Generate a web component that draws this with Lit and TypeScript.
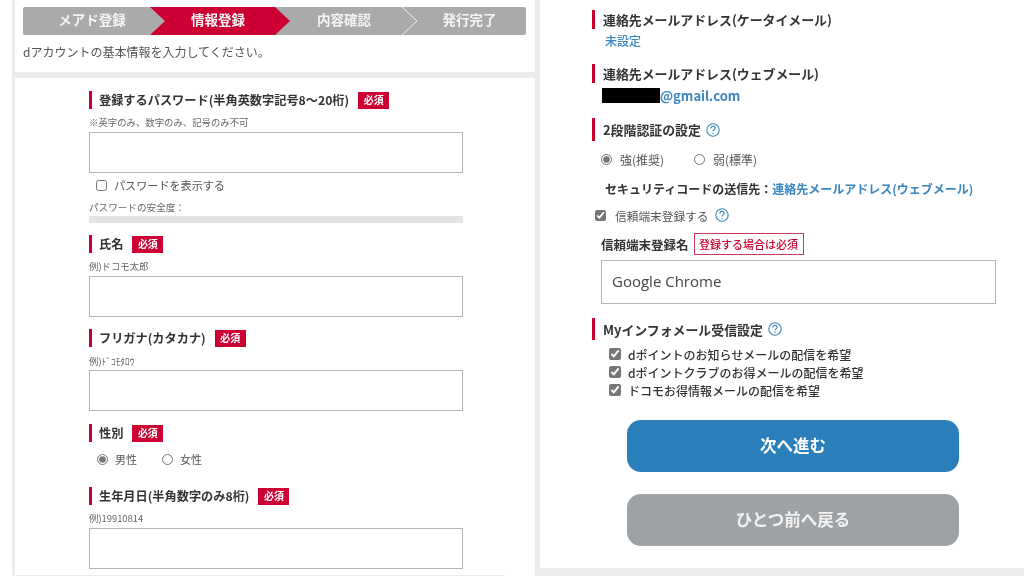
import { LitElement, html, css, svg } from "lit";
import { customElement } from "lit/decorators.js";

const help = html`<svg class="help" viewBox="0 0 14 14" width="14" height="14" aria-hidden="true">
  <circle cx="7" cy="7" r="6.2" fill="none" stroke="#3a87b9" stroke-width="1.1"/>
  <path d="M4.9 5.4c0-1.3 1-2 2.1-2s2.1.8 2.1 1.9c0 1.6-2.1 1.6-2.1 3.3" fill="none" stroke="#3a87b9" stroke-width="1.1"/>
  <path d="M7 9.7v1.2" stroke="#3a87b9" stroke-width="1.1"/>
</svg>`;

@customElement("app-root")
export class AppRoot extends LitElement {
  static styles = css`
    :host {
      display: block;
      width: 1024px;
      height: 576px;
      overflow: hidden;
      background: #fff;
      color: #333;
      font-family: "Noto Sans CJK JP", "Noto Sans", sans-serif;
      font-size: 12px;
      filter: blur(0.35px);
    }
    * { box-sizing: border-box; }
    .page { display: flex; height: 576px; }

    .left {
      margin-left: 12px;
      border-left: 3px solid #ebebeb;
      display: flex;
      flex-direction: column;
      flex: none;
      width: 523px;
    }
    .intro { height: 72px; padding: 7px 9px 0 8px; }
    .steps {
      position: relative;
      display: grid;
      grid-template-columns: 126px 126px 126px 125px;
      height: 28px;
      border-radius: 2px;
      overflow: hidden;
      background: #aaa;
    }
    .steps svg { position: absolute; left: 0; top: 0; }
    .step {
      position: relative;
      padding-left: 12px;
      text-align: center;
      font-size: 13.5px;
      font-weight: 700;
      line-height: 25px;
      color: #f4f4f4;
    }
    .lead { margin: 8px 0 0; font-size: 12px; line-height: 18px; color: #555; }
    .rule { height: 6px; background: #ebebeb; flex: none; }

    .form { flex: 1; min-height: 0; overflow: hidden; padding: 13px 0 0 74px; }
    .edge { flex: none; width: 490px; height: 1px; background: #ebebeb; }
    .col { width: 374px; }
    .head {
      display: flex;
      align-items: center;
      gap: 9px;
      height: 18px;
      border-left: 3px solid #c8002d;
      padding: 0 0 0 7px;
      font-weight: 700;
      font-size: 12.2px;
      color: #333;
      white-space: nowrap;
    }
    .badge {
      flex: none;
      width: 31px;
      height: 17px;
      margin-top: 1px;
      background: #cc0033;
      color: #fff;
      font-size: 10px;
      line-height: 16px;
      font-weight: 700;
      text-align: center;
    }
    .note { font-size: 9.4px; line-height: 14px; color: #666; white-space: nowrap; }
    .safe { margin-top: 8px; font-size: 9.6px; }
    .box {
      display: block;
      width: 100%;
      height: 41px;
      border: 1px solid #b4b4b4;
      border-radius: 0;
      background: #fff;
      margin: 0;
      padding: 0 10px;
    }
    .show {
      display: flex;
      align-items: center;
      gap: 7px;
      height: 14px;
      margin: 5px 0 0 7px;
      color: #555;
      font-size: 11.1px;
    }
    input[type="checkbox"], input[type="radio"] {
      margin: 0;
      flex: none;
      accent-color: #767676;
    }
    .show input { width: 11px; height: 11px; }
    .meter { height: 7px; margin-top: 2px; background: #e1e3e4; }
    .gender { display: flex; align-items: center; height: 14px; margin: 10px 0 0 8px; color: #555; font-size: 11px; }
    .gender input { width: 11px; height: 11px; margin-right: 7px; }
    .gender label { display: flex; align-items: center; margin-right: 25px; }

    .right {
      flex: 1;
      border-left: 5px solid #ebebeb;
      display: flex;
      flex-direction: column;
      height: 576px;
    }
    .rbody { flex: 1; padding: 10px 0 0 52px; }
    .rule-b { height: 8px; background: #ebebeb; flex: none; }
    .rhead { height: 19px; gap: 5px; padding-left: 8px; font-size: 12.9px; font-weight: 700; }
    .val { color: #3a86c0; font-weight: 500; font-size: 12px; line-height: 18px; margin: 3px 0 0 13px; }
    .mail { display: flex; align-items: center; margin: 5px 0 0 10px; height: 15px; font-weight: 700; font-size: 13px; color: #3a86c0; }
    .mask { width: 58px; height: 15px; background: #000; }
    .radios { display: flex; align-items: center; height: 14px; margin: 11px 0 0 9px; color: #555; font-size: 12px; }
    .radios input { width: 11px; height: 11px; margin-right: 8px; }
    .radios label { display: flex; align-items: center; width: 93px; }
    .sec { margin: 15px 0 0 13px; font-weight: 700; font-size: 12px; line-height: 16px; white-space: nowrap; }
    .sec span { color: #3a86c0; }
    .trust { display: flex; align-items: center; height: 16px; margin: 10px 0 0 3px; color: #555; font-size: 11.7px; }
    .trust input { width: 11px; height: 11px; margin-right: 9px; }
    .trust svg { margin-left: 6px; }
    .tname { display: flex; align-items: center; gap: 5px; height: 22px; margin: 10px 0 0 9px; font-weight: 700; font-size: 12.5px; }
    .tag { height: 22px; width: 110px; border: 1px solid #cf3a5c; color: #c8002d; font-size: 11px; font-weight: 500; line-height: 20px; text-align: center; white-space: nowrap; }
    .chrome {
      width: 395px;
      height: 44px;
      margin: 5px 0 0 9px;
      padding-bottom: 2px;
      font: 15px "Open Sans", "Noto Sans", sans-serif;
      color: #444;
    }
    .mi { margin-top: 14px; height: 22px; }
    .opts { margin: 5px 0 0 17px; font-weight: 500; font-size: 12px; color: #333; }
    .opts label { display: flex; align-items: center; height: 18px; }
    .opts input { width: 12px; height: 12px; margin-right: 7px; }
    .btn {
      display: block;
      width: 332px;
      height: 52px;
      margin: 0 0 0 35px;
      border: 0;
      border-radius: 14px;
      color: #fff;
      font: 700 16.5px/50px "Noto Sans CJK JP", sans-serif;
      text-align: center;
    }
    .next { background: #2a7fba; margin-top: 21px; }
    .back { background: #9ea2a5; margin-top: 22px; color: #f2f2f2; }
  `;

  private head(title: string, top: number) {
    return html`<div class="head" style="margin-top:${top}px"><span>${title}</span><span class="badge">必須</span></div>`;
  }

  render() {
    return html`
      <div class="page">
        <section class="left">
          <div class="intro">
            <div class="steps">
              <svg width="503" height="28" viewBox="0 0 503 28" aria-hidden="true">
                ${svg`<path d="M127 0H252L267 14L252 28H127L142 14Z" fill="#cc0033"/>
                <path d="M379 0L394 14L379 28" fill="none" stroke="#f2f2f2" stroke-width="1"/>`}
              </svg>
              <div class="step">メアド登録</div>
              <div class="step">情報登録</div>
              <div class="step">内容確認</div>
              <div class="step">発行完了</div>
            </div>
            <p class="lead">dアカウントの基本情報を入力してください。</p>
          </div>
          <div class="rule"></div>
          <div class="form">
            <div class="col">
              ${this.head("登録するパスワード(半角英数字記号8〜20桁)", 0)}
              <div class="note" style="margin:6px 0 3px">※英字のみ、数字のみ、記号のみ不可</div>
              <input class="box" type="text" />
              <label class="show"><input type="checkbox" />パスワードを表示する</label>
              <div class="note safe">パスワードの安全度：</div>
              <div class="meter"></div>

              ${this.head("氏名", 12)}
              <div class="note" style="margin:6px 0 3px">例)ドコモ太郎</div>
              <input class="box" type="text" />

              ${this.head("フリガナ(カタカナ)", 12)}
              <div class="note" style="margin:7px 0 2px">例)ﾄﾞｺﾓﾀﾛｳ</div>
              <input class="box" type="text" />

              ${this.head("性別", 13)}
              <div class="gender">
                <label><input type="radio" name="g" checked />男性</label>
                <label><input type="radio" name="g" />女性</label>
              </div>

              ${this.head("生年月日(半角数字のみ8桁)", 21)}
              <div class="note" style="margin:6px 0 3px">例)19910814</div>
              <input class="box" type="text" />
            </div>
          </div>
          <div class="edge"></div>
        </section>

        <section class="right">
          <div class="rbody">
            <div class="head rhead">連絡先メールアドレス(ケータイメール)</div>
            <div class="val">未設定</div>
            <div class="head rhead" style="margin-top:14px">連絡先メールアドレス(ウェブメール)</div>
            <div class="mail"><span class="mask"></span>@gmail.com</div>
            <div class="head rhead" style="margin-top:15px;height:23px">2段階認証の設定 ${help}</div>
            <div class="radios">
              <label><input type="radio" name="a" checked />強(推奨)</label>
              <label><input type="radio" name="a" />弱(標準)</label>
            </div>
            <div class="sec">セキュリティコードの送信先：<span>連絡先メールアドレス(ウェブメール)</span></div>
            <label class="trust"><input type="checkbox" checked />信頼端末登録する${help}</label>
            <div class="tname">信頼端末登録名 <span class="tag">登録する場合は必須</span></div>
            <input class="box chrome" type="text" value="Google Chrome" />
            <div class="head rhead mi">Myインフォメール受信設定 ${help}</div>
            <div class="opts">
              <label><input type="checkbox" checked />dポイントのお知らせメールの配信を希望</label>
              <label><input type="checkbox" checked />dポイントクラブのお得メールの配信を希望</label>
              <label><input type="checkbox" checked />ドコモお得情報メールの配信を希望</label>
            </div>
            <div class="btn next">次へ進む</div>
            <div class="btn back">ひとつ前へ戻る</div>
          </div>
          <div class="rule-b"></div>
        </section>
      </div>
    `;
  }
}
